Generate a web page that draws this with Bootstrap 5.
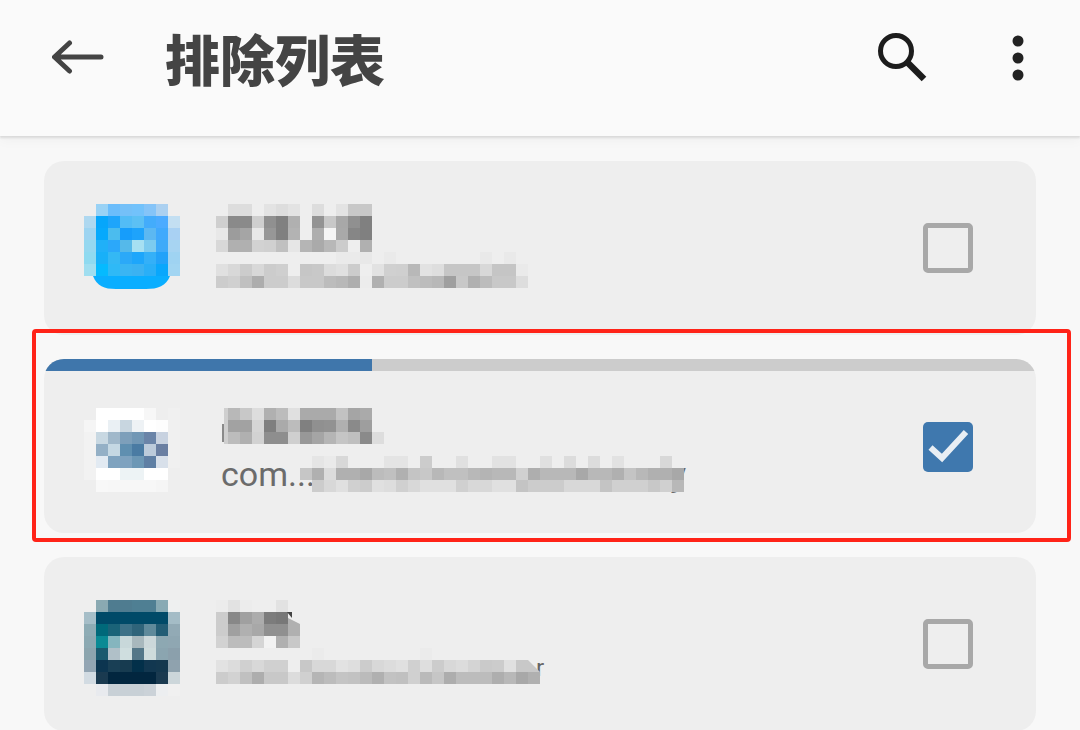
<!DOCTYPE html>
<html lang="zh">
<head>
<meta charset="utf-8">
<title>排除列表</title>
<link rel="stylesheet" href="https://cdn.jsdelivr.net/npm/bootstrap@5.3.0/dist/css/bootstrap.min.css">
<style>
html,body{height:100%;overflow:hidden}
body{background:#f8f8f8;font-family:Roboto,"Noto Sans CJK SC",sans-serif}
.screen{height:730px}
.appbar{height:136px;background:#fafafa;box-shadow:0 2px 2px #dadada,0 4px 12px rgba(0,0,0,.04);padding:0 56px 0 52px}
.appbar-title{font:900 55px/1 "Noto Sans CJK SC",sans-serif;color:#444;margin:0 0 0 61px;position:relative;top:-11px}
.appbar-back{width:52px;height:36px;margin-bottom:20px}
.appbar-search{width:52px;height:52px;margin:0 83px 20px 0}
.appbar-more{width:12px;height:46px;margin-bottom:20px}
.applist{padding:25px 44px 0}
.appcard{height:174px;background:#eee;border:0;border-radius:20px;overflow:hidden;padding:27px 63px 27px 40px;flex-shrink:0}
.appcard-progress{position:absolute;top:0;left:0;right:0;height:12px;border-radius:0;background:#ccc}
.appcard-progress .progress-bar{background:#3f76ab}
.app-icon{width:96px;height:120px;display:block;flex-shrink:0}
.app-text{width:700px;height:120px;margin-left:36px;position:relative}
.app-text svg{position:absolute;left:0;top:0;width:700px;height:120px}
.app-sub{position:absolute;font-size:34px;line-height:40px;color:#6b6b6b;white-space:nowrap}
.app-sub-2{left:5px;top:68px;width:465px;display:flex;justify-content:space-between}
.app-sub-3{left:320px;top:72px;font-size:24px;line-height:24px;color:#666}
.app-check.form-check-input{width:50px;height:50px;margin:0 0 0 auto;flex-shrink:0;background-color:transparent;border:5px solid #a8a8a8;border-radius:5px}
.app-check.form-check-input:checked{margin-top:2px;background-color:#3f78ae;border:0;background-size:100%;background-image:url("data:image/svg+xml,%3Csvg xmlns='http://www.w3.org/2000/svg' viewBox='0 0 50 50'%3E%3Cpath d='M7.500 25.500 19 36 43 10' fill='none' stroke='%23e8eef4' stroke-width='6'/%3E%3C/svg%3E")}
.mark-frame{position:absolute;left:32px;top:329px;width:1039px;height:213px;border:4px solid #ff2318;border-radius:4px;pointer-events:none}
</style>
</head>
<body>
<div class="screen position-relative overflow-hidden">
  <header class="appbar d-flex align-items-center position-relative">
    <svg class="appbar-back" viewBox="0 0 52 36"><path d="M3 17H49M17.500 3 2.500 17 17.500 31" fill="none" stroke="#444" stroke-width="5" stroke-linecap="round" stroke-linejoin="round"/></svg>
    <h1 class="appbar-title">排除列表</h1>
    <svg class="appbar-search ms-auto" viewBox="0 0 52 52"><circle cx="19" cy="19" r="15.500" fill="none" stroke="#1c1c1c" stroke-width="5"/><path d="M30 30 47 47" stroke="#1c1c1c" stroke-width="6.500"/></svg>
    <svg class="appbar-more" viewBox="0 0 12 46"><circle cx="6" cy="6" r="5.500" fill="#222"/><circle cx="6" cy="23" r="5.500" fill="#222"/><circle cx="6" cy="40" r="5.500" fill="#222"/></svg>
  </header>
  <main class="applist d-flex flex-column gap-4">
    <div class="card appcard flex-row align-items-center">
      <svg class="app-icon" id="icon1" viewBox="0 0 96 120"></svg>
      <div class="app-text"><svg id="text1" viewBox="0 0 700 120"></svg></div>
      <input class="form-check-input app-check" type="checkbox" aria-label="选择">
    </div>
    <div class="card appcard flex-row align-items-center">
      <div class="progress appcard-progress"><div class="progress-bar" style="width:33.1%"></div></div>
      <svg class="app-icon" id="icon2" viewBox="0 0 96 120"></svg>
      <div class="app-text"><div class="app-sub app-sub-2"><span>com...</span><span>y</span></div><svg id="text2" viewBox="0 0 700 120"></svg></div>
      <input class="form-check-input app-check" type="checkbox" checked aria-label="选择">
    </div>
    <div class="card appcard flex-row align-items-center">
      <svg class="app-icon" id="icon3" viewBox="0 0 96 120"></svg>
      <div class="app-text"><div class="app-sub app-sub-3">r</div><svg id="text3" viewBox="0 0 700 120"></svg></div>
      <input class="form-check-input app-check" type="checkbox" aria-label="选择">
    </div>
  </main>
  <div class="mark-frame"></div>
</div>
<script src="https://cdn.jsdelivr.net/npm/bootstrap@5.3.0/dist/js/bootstrap.bundle.min.js"></script>
<script>
var NS='http://www.w3.org/2000/svg';
function shape(svg,tag,attrs){
  var e=document.createElementNS(NS,tag);
  for(var k in attrs)e.setAttribute(k,attrs[k]);
  svg.appendChild(e);
}
function mosaic(id,x0,y0,rows){
  var svg=document.getElementById(id);
  rows.forEach(function(row,j){row.split(' ').forEach(function(c,i){
    if(c==='-')return;
    shape(svg,'rect',{x:x0+i*12,y:y0+j*12,width:12,height:12,fill:c.length===2?'#'+c+c+c:'#'+c,'shape-rendering':'crispEdges'});
  })});
  return svg;
}
var i1=mosaic('icon1',0,16,[
'- 99d2f5 6bbdfb 74c0f8 72c2fb 85c4f8 abd0f0 -',
'aed8f0 06a6fb 1ea5fb 52bcf6 5cc0f4 43acfb 4babff c3dff2',
'9dd4f1 06a9fc 4bbcee 169dfb 1ea3fb 5cb8f2 40a9fc a9d1f3',
'95d8f0 20b0f8 2ba8fa 55b9ea a6e0f2 7dcbef 3eaaf9 a7d4f2',
'8fdaf0 18b0f8 34b8f4 2ba9f8 1da6fb 34b0f8 22a2f9 9fd3f2',
'a0def0 05baff 2fb9f6 3ab5f3 3bb2f2 2aaff7 09a7fc a2d5f2']);
shape(i1,'path',{d:'M9 88H86C82 98 74 101 62 101H32C20 101 13 98 9 88Z',fill:'#0aaeff'});

mosaic('text1',0,16,[
'ee dd dd ee e3 dd e3 - dd ee e3 c8 c8',
'cf 8a 8a cf 90 80 b0 - 93 c8 a8 90 80',
'e8 9c a5 e8 97 80 b3 - ae f5 a9 86 80',
'd8 b0 b0 d2 d0 c0 e6 b5 aa b8 cc ee b0',
'- - - - - - - - - - ea ea e8 - ea - - - - - - - e9 - e9 -',
'e0 d8 cc d8 cc cf ee c6 c8 dc e0 cc ee e2 d0 cf b8 e2 de c6 c6 c6 d8 c5 c5 ea',
'cc d0 c0 ad cc cc dc c8 c8 bc b8 ae ec b0 cc cc c0 bc b8 9f c8 b0 bc c8 c8 dd']);

mosaic('icon2',0,22,[
'ee fff fff fff fff f7 ee f0',
'f5 fff eaf0f4 c8d6e0 eef2f5 fff fdfdfd f0',
'f2 c8d8e2 a0b8ca 7d9fba 7197b5 6a84a8 c8d2e0 f0',
'f2 94b0c6 c5d8e3 5f8fb0 4a7ba3 bccbdb 6a7fa2 f0',
'f2 e2eaf2 7fa3bf 7ea2bf 6c97b5 5f7fa4 d8e0ea f0',
'f2 fff fff edf3f5 edf3f5 fff fff ee',
'- f8 f7 f7 f7 f7 f5 -']);

var t2=mosaic('text2',12,22,[
'b8 c8 dd b0 bc e0 aa aa aa c2 a5 aa ee',
'a2 a2 d5 7f aa bc 80 90 92 b0 8a 9e ee',
'bc b0 d2 8e 8e cf 98 a5 b5 c5 bf 8a dd']);
shape(t2,'rect',{x:8,y:22,width:4,height:36,fill:'#cfcfcf'});
shape(t2,'rect',{x:6,y:38,width:2,height:18,fill:'#8a8a8a'});
mosaic('text2',84,70,[
'ee e5 ea d8 ee ee ee e4 e4 ee cc ee ee e0 ee ee e2 e2 ee ee e0 ee dc ee dc ee e2 ee ee ee d8 ee',
'c6 b0 dc b0 b0 a8 bc c0 b0 c4 c8 b8 c0 c0 b8 b4 b8 b8 d0 ae b8 b8 b8 a8 b8 b8 b0 c4 b8 b0 b0 a8',
'- cc d8 e0 d0 cc e0 dd d0 d8 e0 e0 e0 d0 d8 d8 e0 e0 c4 cc cc cc d8 d8 d8 c4 d0 d0 d0 c8 d0 b8']);

mosaic('icon3',0,16,[
'ee 8aa9b2 4f7c90 4f7c90 4f7f93 4f7f93 88aab4 eef0f0',
'a6bec8 004a68 004a68 004a68 004a68 004a68 004a68 a4bcc6',
'8eacb5 00697a 1a6378 3d7187 2f647a 5f8a9b 235d75 92aab5',
'8ca9b2 0a8a94 85b5be c8d8da a8b8bd ccd8da 8da8b2 8fa7b2',
'8ca5ae 1a5a6e b0c0c8 cfdedf 547788 cfdcdc 8ba5b0 8ba0ac',
'93a5b3 0c3550 193f55 173b50 03304a 123750 14384f 8fa2ae',
'd2dbe2 1a3a50 02263f 02263f 02263f 02263f 1a3a50 ccd6da',
'ee e8eaee c8d0d6 c8d0d6 c8d0d6 cbd2d8 eceef0 f0']);

var t3=mosaic('text3',0,16,[
'ec e2 ec ee ee e2',
'cc 88 a0 ac 7c 78',
'cc a0 b0 a8 90 90 b0',
'd2 bc bc d5 f2 b0 c8',
'- - - - - - - - eb - - - - - - - - eb',
'e2 dc d0 d8 d0 d0 ee c8 d8 d8 e2 de cc d8 dc e0 d0 de cc d8 dc d4 ca cc e0 c8',
'cc d2 c0 ad c8 c8 dc d0 b5 bc c4 c2 bb b0 c2 c0 d0 ba c6 ad bc bc bc ae b8 a8 b0']);
shape(t3,'polygon',{points:'312,76 324,88 312,88',fill:'#c8c8c8'});
shape(t3,'polygon',{points:'71,28 76,28 76,34',fill:'#444'});
shape(t3,'polygon',{points:'72,34 84,40 72,40',fill:'#b0b0b0'});
</script>
</body>
</html>
